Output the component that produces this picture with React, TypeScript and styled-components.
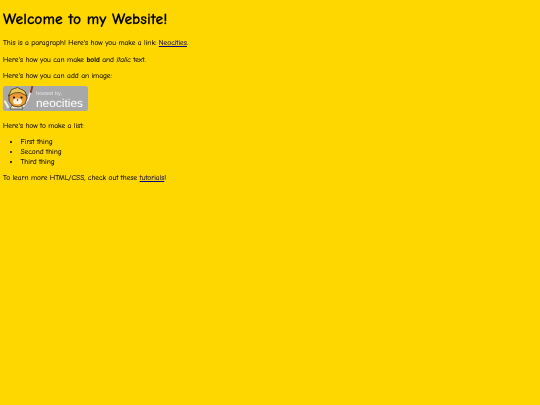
import React from "react";
import styled, { createGlobalStyle } from "styled-components";

const Global = createGlobalStyle`
  html, body { margin: 0; padding: 0; height: 100%; }
  body { background: #ffd700; color: #000; font-family: "Comic Sans MS", "Comic Neue", cursive; }
`;
const Page = styled.main`
  padding: 3px;
  font-size: 7.35px;
  line-height: 9px;
  text-rendering: geometricPrecision;
  filter: blur(0.25px);
  -webkit-text-stroke: 0.1px #000;
`;
const Title = styled.h1`
  font-size: 15.7px;
  line-height: 20px;
  font-weight: 700;
  margin: 6px 0 9px;
`;
const Para = styled.p<{ $tight?: boolean }>`
  margin: 0 0 ${(p) => (p.$tight ? "6px" : "7.5px")};
`;
const Link = styled.a`
  color: #000080;
  text-decoration: underline;
  text-decoration-thickness: 0.5px;
  -webkit-text-stroke: 0.1px #000080;
`;
const Badge = styled.svg`
  display: block;
  width: 85px;
  height: 25px;
  margin-bottom: 9.5px;
  -webkit-text-stroke: 0;
`;
const List = styled.ul`
  margin: 0 0 7px;
  padding-left: 17.5px;
`;
const Item = styled.li`
  line-height: 9.8px;
`;

function NeocitiesBadge() {
  return (
    <Badge viewBox="0 0 85 25">
      <rect x="0" y="0" width="85" height="25" rx="2.5" fill="#a8a8a8" />
      <path d="M28.5 2.5l-3.5 11" stroke="#f2f2f2" strokeWidth="1.5" strokeLinecap="round" />
      <path d="M29.2 1l-1.4 5" stroke="#8a3d22" strokeWidth="2" strokeLinecap="round" />
      <path d="M2 15.5l3 5.5M24.5 14l-4 6" stroke="#f4f0e0" strokeWidth="2" strokeLinecap="round" />
      <path d="M9 19h9l2 4H7z" fill="#e9e3cc" stroke="#3a3020" strokeWidth=".6" />
      <path d="M6 9l3-5 7-1 6 3 2 6-2 6-6 3-6-1-4-5z" fill="#ea9a32" stroke="#3a2a18" strokeWidth=".8" />
      <path d="M5.5 10l3-6.5 6-2 7 3.5 2.5 5-7-3.5-6 .5z" fill="#e8c850" stroke="#3a2a18" strokeWidth=".7" />
      <ellipse cx="14.5" cy="15.5" rx="4.5" ry="3" fill="#fff3dc" />
      <circle cx="11" cy="11.5" r="1.1" fill="#1e1810" />
      <circle cx="18.5" cy="11.5" r="1.1" fill="#1e1810" />
      <circle cx="14.5" cy="14" r=".8" fill="#1e1810" />
      <text x="33" y="8.5" fontFamily="'Liberation Sans', sans-serif" fontSize="5" fill="#e4e4e4" textLength="26" lengthAdjust="spacingAndGlyphs">hosted by,</text>
      <text x="33" y="20.5" fontFamily="'Liberation Sans', sans-serif" fontSize="11.5" fill="#fff" textLength="47" lengthAdjust="spacingAndGlyphs">neocities</text>
    </Badge>
  );
}

export default function App() {
  return (
    <Page>
      <Global />
      <Title>Welcome to my Website!</Title>
      <Para>This is a paragraph! Here's how you make a link: <Link href="#">Neocities</Link>.</Para>
      <Para>Here's how you can make <b>bold</b> and <i>italic</i> text.</Para>
      <Para $tight>Here's how you can add an image:</Para>
      <NeocitiesBadge />
      <Para>Here's how to make a list:</Para>
      <List>
        <Item>First thing</Item>
        <Item>Second thing</Item>
        <Item>Third thing</Item>
      </List>
      <Para>To learn more HTML/CSS, check out these <Link href="#">tutorials</Link>!</Para>
    </Page>
  );
}
